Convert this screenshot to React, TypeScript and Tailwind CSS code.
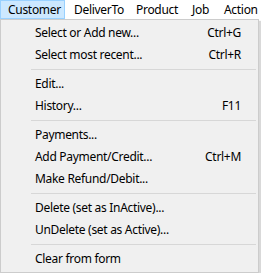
import React from "react";

type Item = { label: string; shortcut?: string } | "sep";

const items: Item[] = [
  { label: "Select or Add new...", shortcut: "Ctrl+G" },
  { label: "Select most recent...", shortcut: "Ctrl+R" },
  "sep",
  { label: "Edit..." },
  { label: "History...", shortcut: "F11" },
  "sep",
  { label: "Payments..." },
  { label: "Add Payment/Credit...", shortcut: "Ctrl+M" },
  { label: "Make Refund/Debit..." },
  "sep",
  { label: "Delete (set as InActive)..." },
  { label: "UnDelete (set as Active)..." },
  "sep",
  { label: "Clear from form" },
];

export default function App() {
  return (
    <div
      className="w-[261px] h-[273px] bg-white overflow-hidden text-[12px] tracking-[-0.3px] text-black"
      style={{ fontFamily: '"Noto Sans", "Liberation Sans", sans-serif' }}
    >
      <div className="flex h-[19px] items-center whitespace-nowrap">
        <div className="h-[19px] w-[65px] shrink-0 border border-[#99d1ff] bg-[#cce8ff] pl-[7px] leading-[17px]">
          Customer
        </div>
        <div className="w-[71px] shrink-0 pl-[9px]">DeliverTo</div>
        <div className="w-[56px] shrink-0">Product</div>
        <div className="w-[32px] shrink-0">Job</div>
        <div className="shrink-0">Action</div>
      </div>
      <div className="w-[259px] border border-[#cccccc] bg-[#f0f0f0] py-[2px] shadow-[2px_2px_1px_rgba(0,0,0,0.15)]">
        {items.map((it, i) =>
          it === "sep" ? (
            <div key={i} className="flex h-[7px] items-center pl-[30px] pr-[2px]">
              <div className="h-px w-full bg-[#d7d7d7]" />
            </div>
          ) : (
            <div key={i} className="flex h-[22px] items-center justify-between pl-[34px] pr-[17px]">
              <span>{it.label}</span>
              {it.shortcut && <span>{it.shortcut}</span>}
            </div>
          )
        )}
      </div>
    </div>
  );
}
